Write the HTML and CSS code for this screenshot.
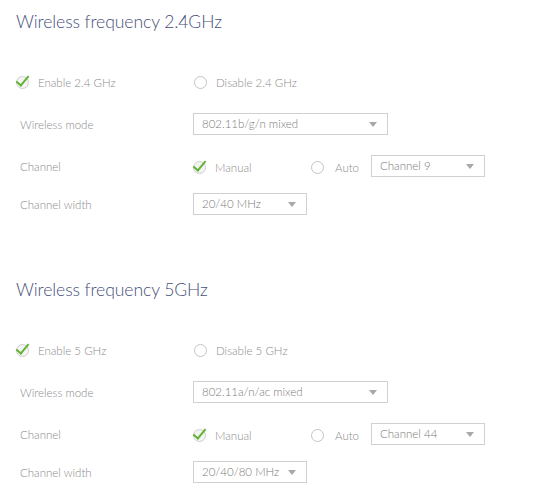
FILE: index.html
```html
<!DOCTYPE html>
<html lang="en">
<head>
  <meta charset="UTF-8">
  <title>Wireless settings</title>
  <link rel="stylesheet" href="styles.css">
</head>
<body>
  <!-- 2.4 GHz band -->
  <div class="band">
    <h2 class="band-title">Wireless frequency 2.4GHz</h2>

    <div class="toggle-row">
      <label class="option wide"><span class="tick"></span>Enable 2.4 GHz</label>
      <label class="option"><span class="radio"></span>Disable 2.4 GHz</label>
    </div>

    <div class="field">
      <span class="field-label">Wireless mode</span>
      <div class="select mode">802.11b/g/n mixed<span class="caret"></span></div>
    </div>

    <div class="field">
      <span class="field-label">Channel</span>
      <label class="option manual"><span class="tick"></span>Manual</label>
      <label class="option auto"><span class="radio"></span>Auto</label>
      <div class="select channel">Channel 9<span class="caret"></span></div>
    </div>

    <div class="field last">
      <span class="field-label">Channel width</span>
      <div class="select width">20/40 MHz<span class="caret"></span></div>
    </div>
  </div>

  <!-- 5 GHz band -->
  <div class="band">
    <h2 class="band-title">Wireless frequency 5GHz</h2>

    <div class="toggle-row">
      <label class="option wide"><span class="tick"></span>Enable 5 GHz</label>
      <label class="option"><span class="radio"></span>Disable 5 GHz</label>
    </div>

    <div class="field">
      <span class="field-label">Wireless mode</span>
      <div class="select mode">802.11a/n/ac mixed<span class="caret"></span></div>
    </div>

    <div class="field">
      <span class="field-label">Channel</span>
      <label class="option manual"><span class="tick"></span>Manual</label>
      <label class="option auto"><span class="radio"></span>Auto</label>
      <div class="select channel">Channel 44<span class="caret"></span></div>
    </div>

    <div class="field last">
      <span class="field-label">Channel width</span>
      <div class="select width">20/40/80 MHz<span class="caret"></span></div>
    </div>
  </div>
</body>
</html>
```

FILE: styles.css
```css
/* Global Styles */
* {
  margin: 0;
  padding: 0;
  box-sizing: border-box;
}

body {
  font-family: Lato, "Open Sans", sans-serif;
  font-weight: 300;
  background: #ffffff;
  color: #8a8a8a;
  font-size: 11.5px;
}

/* Band block */
.band {
  padding: 10px 0 0 16px;
}

.band + .band {
  padding-top: 63px;
}

.band-title {
  font-size: 17.6px;
  line-height: 24px;
  font-weight: 300;
  color: #465078;
  letter-spacing: -0.1px;
}

/* Enable / disable row */
.toggle-row {
  display: flex;
  align-items: center;
  height: 22px;
  margin-top: 37px;
}

.option {
  display: flex;
  align-items: center;
  color: #8c8c8c;
}

.option.wide {
  width: 178px;
}

/* Ticked option: grey ring with a green check on top */
.tick {
  position: relative;
  width: 13px;
  height: 13px;
  margin-right: 9px;
  border: 1px solid #cfcfcf;
  border-radius: 50%;
  background: #f4f4f4;
}

.tick::after {
  content: "";
  position: absolute;
  left: 2px;
  top: -4px;
  width: 5px;
  height: 11px;
  border-right: 2px solid #62b233;
  border-bottom: 2px solid #62b233;
  transform: rotate(40deg);
}

.radio {
  width: 13px;
  height: 13px;
  margin-right: 9px;
  border: 1px solid #c4c4c4;
  border-radius: 50%;
  background: #ffffff;
}

/* Label + control rows */
.field {
  display: flex;
  align-items: center;
  height: 22px;
  margin-top: 20px;
  padding-left: 4px;
}

.field.last {
  margin-top: 16px;
}

.field-label {
  width: 173px;
  color: #8a8a8a;
}

.option.manual {
  width: 118px;
  margin-top: 3px;
}

.option.auto {
  width: 60px;
  margin-top: 3px;
}

.option.auto .radio {
  margin-right: 11px;
}

/* Drop-down boxes */
.select {
  position: relative;
  height: 22px;
  line-height: 20px;
  padding-left: 8px;
  border: 1px solid #d0d0d0;
  color: #7a7a7a;
  background: #ffffff;
}

.select.mode {
  width: 195px;
}

.select.channel {
  width: 114px;
}

.select.width {
  width: 114px;
}

.caret {
  position: absolute;
  right: 10px;
  top: 8px;
  border-left: 4px solid transparent;
  border-right: 4px solid transparent;
  border-top: 5px solid #a8a8a8;
}
```
